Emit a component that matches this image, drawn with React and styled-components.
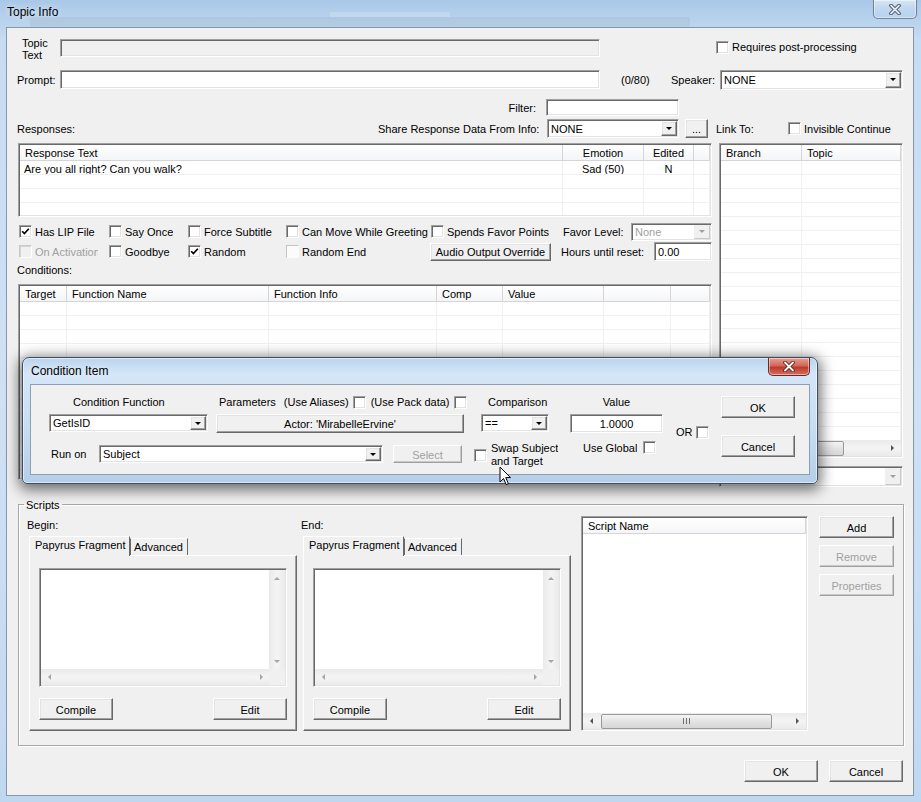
import React from 'react'
import styled, { createGlobalStyle, css } from 'styled-components'

const GlobalStyle = createGlobalStyle`
  * { box-sizing: border-box; }
  html, body { margin: 0; padding: 0; }
  body {
    font-family: "Liberation Sans", Arial, sans-serif;
    font-size: 11px;
    color: #000;
    background: #c4daf0;
  }
`

const sunken = css`
  border: 1px solid;
  border-color: #a0a0a0 #ffffff #ffffff #a0a0a0;
  box-shadow: inset 1px 1px 0 #696969, inset -1px -1px 0 #e3e3e3;
`
const raised = css`
  border: 1px solid;
  border-color: #ffffff #696969 #696969 #ffffff;
  box-shadow: inset -1px -1px 0 #a0a0a0, inset 1px 1px 0 #e3e3e3;
`

const Desktop = styled.div`
  position: relative;
  width: 921px;
  height: 802px;
  overflow: hidden;
  display: flex;
  flex-direction: column;
  background: linear-gradient(180deg, #a9c8e8 0%, #c6dcf1 40px, #cfe2f4 50%, #c0d8ef 100%);
`
const TitleBar = styled.div`
  height: ${p => p.$h}px;
  flex-shrink: 0;
  display: flex;
  align-items: center;
  padding-left: ${p => p.$pl}px;
  background: ${p => p.$ghost
    ? `linear-gradient(rgba(110,125,140,0.11), rgba(110,125,140,0.11)) 30px 17px / 660px 10px no-repeat,
       linear-gradient(rgba(255,255,255,0.18), rgba(255,255,255,0.18)) 330px 12px / 120px 5px no-repeat`
    : 'transparent'};
`
const TitleText = styled.span`
  font-size: 12px;
  color: #000;
  padding-bottom: ${p => p.$pb || 0}px;
  text-shadow: 0 0 6px rgba(255, 255, 255, 0.9);
`
const CloseBtn = styled.div`
  margin-left: auto;
  margin-right: ${p => p.$mr}px;
  align-self: flex-start;
  width: ${p => p.$w}px;
  height: ${p => p.$h}px;
  display: flex;
  align-items: center;
  justify-content: center;
  border: 1px solid ${p => (p.$red ? '#6a2a24' : 'rgba(60, 80, 105, 0.65)')};
  border-top: none;
  border-radius: 0 0 5px 5px;
  background: ${p => p.$red
    ? 'linear-gradient(180deg, #e4a093 0%, #d2685b 45%, #c0392c 55%, #d3705f 100%)'
    : 'linear-gradient(180deg, rgba(255,255,255,0.55) 0%, rgba(220,234,247,0.35) 50%, rgba(190,212,235,0.4) 100%)'};
  box-shadow: inset 0 0 0 1px rgba(255, 255, 255, 0.45);
`

const Client = styled.div`
  flex: 1;
  margin: 0 7px 6px 6px;
  border: 1px solid #8797a8;
  background: #f0f0f0;
  display: flex;
  flex-direction: column;
  padding-left: 10px;
`
const Row = styled.div`
  display: flex;
  align-items: ${p => p.$align || 'center'};
  height: ${p => p.$h}px;
  margin-top: ${p => p.$mt || 0}px;
  margin-left: ${p => p.$ml || 0}px;
  padding-left: ${p => p.$pl || 0}px;
  padding-right: ${p => p.$pr || 0}px;
  justify-content: ${p => p.$justify || 'flex-start'};
  gap: ${p => p.$gap || 0}px;
  flex-shrink: 0;
`
const Text = styled.span`
  flex-shrink: 0;
  width: ${p => (p.$w ? `${p.$w}px` : 'auto')};
  padding-left: ${p => p.$pl || 0}px;
  padding-right: ${p => p.$pr || 0}px;
  padding-top: 1px;
  margin-left: ${p => p.$ml || 0}px;
  margin-top: ${p => p.$mt || 0}px;
  text-align: ${p => p.$align || 'left'};
  color: ${p => (p.$disabled ? '#a0a0a0' : '#000')};
  white-space: nowrap;
  line-height: ${p => p.$lh || 13}px;
  overflow: hidden;
`
const Field = styled.div`
  ${sunken}
  flex-shrink: 0;
  width: ${p => p.$w}px;
  height: ${p => p.$h || 19}px;
  margin-left: ${p => p.$ml || 0}px;
  background: ${p => (p.$disabled ? '#f0f0f0' : '#fff')};
  color: ${p => (p.$dim ? '#a0a0a0' : '#000')};
  display: flex;
  align-items: center;
  justify-content: ${p => (p.$center ? 'center' : 'flex-start')};
  padding: ${p => (p.$combo ? '0 0 0 3px' : '1px 3px 0')};
  white-space: nowrap;
  overflow: hidden;
`
const ArrowBox = styled.div`
  ${raised}
  margin: 1px 1px 1px auto;
  width: 16px;
  height: calc(100% - 2px);
  flex-shrink: 0;
  background: #f0f0f0;
  display: flex;
  align-items: center;
  justify-content: center;
  ${p => p.$disabled && css`
    border-color: #f0f0f0 #c8c8c8 #c8c8c8 #f0f0f0;
    box-shadow: none;
  `}
`
const Arrow = styled.span`
  width: 0;
  height: 0;
  flex-shrink: 0;
  ${({ $dir = 'down', $s = 3.5, $c = '#000' }) => {
    const t = 'transparent'
    if ($dir === 'down') return `border-left:${$s}px solid ${t};border-right:${$s}px solid ${t};border-top:${$s}px solid ${$c};`
    if ($dir === 'up') return `border-left:${$s}px solid ${t};border-right:${$s}px solid ${t};border-bottom:${$s}px solid ${$c};`
    if ($dir === 'left') return `border-top:${$s}px solid ${t};border-bottom:${$s}px solid ${t};border-right:${$s}px solid ${$c};`
    return `border-top:${$s}px solid ${t};border-bottom:${$s}px solid ${t};border-left:${$s}px solid ${$c};`
  }}
`
const Btn = styled.div`
  ${raised}
  flex-shrink: 0;
  width: ${p => p.$w}px;
  height: ${p => p.$h || 22}px;
  margin-left: ${p => p.$ml || 0}px;
  margin-top: ${p => p.$mt || 0}px;
  padding-top: 1px;
  background: #f0f0f0;
  display: flex;
  align-items: center;
  justify-content: center;
  white-space: nowrap;
  color: ${p => (p.$disabled ? '#a0a0a0' : '#000')};
  ${p => p.$disabled && css`
    border-color: #ffffff #a0a0a0 #a0a0a0 #ffffff;
    box-shadow: inset -1px -1px 0 #c8c8c8;
  `}
`
const Box = styled.span`
  ${sunken}
  width: 13px;
  height: 13px;
  flex-shrink: 0;
  margin-left: ${p => p.$ml || 0}px;
  margin-top: ${p => p.$mt || 0}px;
  background: ${p => (p.$disabled ? '#f0f0f0' : '#fff')};
  display: flex;
  align-items: center;
  justify-content: center;
  ${p => p.$disabled && css`
    border-color: #c8c8c8 #fff #fff #c8c8c8;
    box-shadow: inset 1px 1px 0 #d4d4d4;
  `}
  ${p => p.$flat && css`
    border-color: #c4c4c4 transparent transparent #c4c4c4;
    box-shadow: none;
    background: #fbfbfb;
  `}
`
const CheckLabel = styled.label`
  display: flex;
  align-items: ${p => (p.$top ? 'flex-start' : 'center')};
  gap: 3px;
  flex-shrink: 0;
  width: ${p => (p.$w ? `${p.$w}px` : 'auto')};
  margin-left: ${p => p.$ml || 0}px;
  margin-top: ${p => p.$mt || 0}px;
  align-self: ${p => p.$self || 'auto'};
`

const Tick = () => (
  <svg width="9" height="9" viewBox="0 0 9 9">
    <polyline points="1.2,4.2 3.4,6.6 7.8,1.8" fill="none" stroke="#000" strokeWidth="1.7" />
  </svg>
)

const Check = ({ w, label, checked, disabled, flat, clip, ml }) => (
  <CheckLabel $w={w} $ml={ml}>
    <Box $disabled={disabled} $flat={flat}>{checked && <Tick />}</Box>
    <Text $disabled={disabled} $w={clip}>{label}</Text>
  </CheckLabel>
)

const Combo = ({ w, h = 19, value, disabled, ml }) => (
  <Field $w={w} $h={h} $combo $ml={ml} $dim={disabled}>
    <Text $disabled={disabled}>{value}</Text>
    <ArrowBox $disabled={disabled}>
      <Arrow $s={3.5} $c={disabled ? '#a0a0a0' : '#000'} />
    </ArrowBox>
  </Field>
)

/* list view */
const ListBox = styled.div`
  ${sunken}
  flex-shrink: 0;
  width: ${p => p.$w}px;
  height: ${p => p.$h}px;
  margin-top: ${p => p.$mt || 0}px;
  background: #fff;
  padding: 1px;
  display: flex;
  flex-direction: column;
  overflow: hidden;
`
const ListHead = styled.div`
  display: flex;
  height: 16px;
  flex-shrink: 0;
  background: linear-gradient(180deg, #ffffff, #f4f5f7);
  border-bottom: 1px solid #d5d5d5;
`
const HeadCell = styled.div`
  flex: ${p => (p.$w ? `0 0 ${p.$w}px` : '1')};
  border-right: 1px solid #d5d5d5;
  padding: 1px 5px 0;
  line-height: 15px;
  white-space: nowrap;
  overflow: hidden;
  text-align: ${p => (p.$center ? 'center' : 'left')};
`
const ListBody = styled.div`
  flex: 1;
  overflow: hidden;
`
const ListRow = styled.div`
  display: flex;
  height: 14px;
  border-bottom: 1px solid #f0f0f0;
`
const Cell = styled.div`
  flex: ${p => (p.$w ? `0 0 ${p.$w}px` : '1')};
  border-right: 1px solid #f0f0f0;
  padding: 2px 4px 0;
  line-height: 13px;
  white-space: nowrap;
  overflow: hidden;
  text-align: ${p => (p.$center ? 'center' : 'left')};
`

const ScrollBar = styled.div`
  display: flex;
  align-items: center;
  height: 16px;
  flex-shrink: 0;
  background: linear-gradient(180deg, #eaeaea, #f4f4f4 50%, #eaeaea);
`
const ScrollBtn = styled.div`
  width: ${p => p.$w || 17}px;
  height: 100%;
  flex-shrink: 0;
  margin-left: ${p => (p.$end ? 'auto' : '0')};
  display: flex;
  align-items: center;
  justify-content: center;
`
const Thumb = styled.div`
  width: ${p => p.$w}px;
  margin-left: ${p => p.$ml || 0}px;
  height: 15px;
  flex-shrink: 0;
  border: 1px solid #9a9a9a;
  border-radius: 2px;
  background: linear-gradient(180deg, #f4f4f4, #e3e3e3 50%, #d6d6d6);
  display: flex;
  align-items: center;
  justify-content: center;
`
const Grip = styled.span`
  width: 7px;
  height: 6px;
  background: repeating-linear-gradient(90deg, #6f6f6f 0 1px, transparent 1px 3px);
`

const HScroll = ({ thumb, thumbMl, grip, arrowColor = '#555' }) => (
  <ScrollBar>
    <ScrollBtn><Arrow $dir="left" $s={3} $c={arrowColor} /></ScrollBtn>
    {thumb && <Thumb $w={thumb} $ml={thumbMl}>{grip && <Grip />}</Thumb>}
    <ScrollBtn $end><Arrow $dir="right" $s={3} $c={arrowColor} /></ScrollBtn>
  </ScrollBar>
)

const ListView = ({ w, h, mt, cols, rows = [], count, scroll }) => {
  const lines = Array.from({ length: count }, (_, i) => rows[i] || [])
  return (
    <ListBox $w={w} $h={h} $mt={mt}>
      <ListHead>
        {cols.map((c, i) => (
          <HeadCell key={i} $w={c.w} $center={c.center}>{c.label}</HeadCell>
        ))}
      </ListHead>
      <ListBody>
        {lines.map((r, i) => (
          <ListRow key={i}>
            {cols.map((c, j) => (
              <Cell key={j} $w={c.w} $center={c.center}>{r[j] || ''}</Cell>
            ))}
          </ListRow>
        ))}
      </ListBody>
      {scroll}
    </ListBox>
  )
}

/* layout blocks */
const TopicLabel = styled.div`
  width: 43px;
  flex-shrink: 0;
  padding-left: 5px;
  padding-top: 1px;
  line-height: 12px;
`
const Main = styled.div`
  display: flex;
  margin-top: 5px;
  margin-left: 1px;
  flex-shrink: 0;
`
const Column = styled.div`
  display: flex;
  flex-direction: column;
  flex-shrink: 0;
  width: ${p => p.$w}px;
  margin-left: ${p => p.$ml || 0}px;
`

const Group = styled.fieldset`
  margin: 10px 0 0 1px;
  width: 886px;
  height: 249px;
  padding: 4px 0 0 0;
  border: 1px solid #a8a8a8;
  box-shadow: inset 1px 1px 0 #fff, 1px 1px 0 #fff;
  min-width: 0;
  flex-shrink: 0;
`
const Legend = styled.legend`
  margin-left: 5px;
  padding: 1px 2px 0;
  line-height: 14px;
`
const GroupRow = styled.div`
  display: flex;
  align-items: flex-start;
`
const TabStrip = styled.div`
  display: flex;
  align-items: flex-end;
  height: 19px;
  margin-top: 4px;
`
const Tab = styled.div`
  position: relative;
  z-index: ${p => (p.$active ? 2 : 1)};
  width: ${p => p.$w}px;
  height: ${p => (p.$active ? 20 : 17)}px;
  margin-bottom: ${p => (p.$active ? -1 : 0)}px;
  border: 1px solid;
  border-bottom: none;
  border-color: ${p => (p.$active ? '#fff #696969 transparent #fff' : '#fff #696969 transparent #696969')};
  background: #f0f0f0;
  padding: ${p => (p.$active ? '2px 0 0 5px' : '2px 0 0 3px')};
  line-height: 13px;
  white-space: nowrap;
`
const TabPanel = styled.div`
  height: 176px;
  border: 1px solid;
  border-color: #fff #696969 #696969 #fff;
  box-shadow: inset -1px -1px 0 #a0a0a0;
  background: #f0f0f0;
  padding: 12px 9px 0 9px;
`
const Editor = styled.div`
  ${sunken}
  height: 119px;
  padding: 1px;
  display: grid;
  grid-template-columns: 1fr 16px;
  grid-template-rows: 1fr 16px;
  background: #fff;
`
const VTrack = styled.div`
  background: linear-gradient(90deg, #eaeaea, #f4f4f4 50%, #eaeaea);
  display: flex;
  flex-direction: column;
  align-items: center;
  justify-content: space-between;
  padding: 7px 0 6px;
`
const Corner = styled.div`
  background: #f0f0f0;
`
const HTrack = styled.div`
  background: linear-gradient(180deg, #eaeaea, #f4f4f4 50%, #eaeaea);
  display: flex;
  align-items: center;
  justify-content: space-between;
  padding: 0 6px 0 7px;
`

const ScriptPane = ({ title, ml }) => (
  <Column $w={268} $ml={ml}>
    <Text $ml={-2} $mt={1} $lh={14}>{title}</Text>
    <TabStrip>
      <Tab $active $w={101}>Papyrus Fragment</Tab>
      <Tab $w={58}>Advanced</Tab>
    </TabStrip>
    <TabPanel>
      <Editor>
        <div />
        <VTrack>
          <Arrow $dir="up" $s={3} $c="#a5a5a5" />
          <Arrow $dir="down" $s={3} $c="#a5a5a5" />
        </VTrack>
        <HTrack>
          <Arrow $dir="left" $s={3} $c="#a5a5a5" />
          <Arrow $dir="right" $s={3} $c="#a5a5a5" />
        </HTrack>
        <Corner />
      </Editor>
      <Row $h={22} $mt={11} $justify="space-between">
        <Btn $w={74}>Compile</Btn>
        <Btn $w={74}>Edit</Btn>
      </Row>
    </TabPanel>
  </Column>
)

/* condition dialog */
const Dialog = styled.div`
  position: absolute;
  left: 22px;
  top: 357px;
  width: 796px;
  height: 127px;
  z-index: 10;
  border: 1px solid #3c4d61;
  border-radius: 7px 7px 5px 5px;
  background: linear-gradient(180deg, #b9d4ee 0%, #d4e6f7 16px, #c9def3 50%, #b5cfe9 100%);
  box-shadow: 0 3px 14px 3px rgba(0, 0, 0, 0.55), inset 0 0 0 1px rgba(255, 255, 255, 0.55);
  padding: 0 7px 8px 7px;
  display: flex;
  flex-direction: column;
`
const DialogClient = styled.div`
  height: 91px;
  border: 1px solid #8ba0b5;
  background: #f0f0f0;
  display: flex;
`
const DialogLeft = styled.div`
  width: 690px;
  flex-shrink: 0;
  padding-left: 18px;
  display: flex;
  flex-direction: column;
`
const DialogRight = styled.div`
  display: flex;
  flex-direction: column;
`
const ParamGroup = styled.div`
  display: flex;
  align-items: center;
  width: 262px;
  flex-shrink: 0;
`
const Pointer = styled.svg`
  position: absolute;
  left: 499px;
  top: 466px;
  z-index: 20;
`

const CloseGlyph = ({ light }) => (
  <svg width="12" height="11" viewBox="0 0 12 11">
    <path d="M2 1.5 L10 9.5 M10 1.5 L2 9.5" stroke={light ? '#3b4a58' : '#5a1d17'} strokeWidth="3.6" strokeLinecap="round" />
    <path d="M2 1.5 L10 9.5 M10 1.5 L2 9.5" stroke={light ? '#dfe6ee' : '#fff'} strokeWidth="1.8" strokeLinecap="round" />
  </svg>
)

const responseCols = [
  { label: 'Response Text', w: 543 },
  { label: 'Emotion', w: 81, center: true },
  { label: 'Edited', w: 50, center: true },
  { label: '' },
]
const conditionCols = [
  { label: 'Target', w: 47 },
  { label: 'Function Name', w: 202 },
  { label: 'Function Info', w: 168 },
  { label: 'Comp', w: 66 },
  { label: 'Value', w: 101 },
  { label: '', w: 67 },
  { label: '' },
]
const linkCols = [
  { label: 'Branch', w: 81 },
  { label: 'Topic' },
]

export default function App() {
  return (
    <Desktop>
      <GlobalStyle />
      <TitleBar $h={27} $pl={7} $ghost>
        <TitleText $pb={3}>Topic Info</TitleText>
        <CloseBtn $w={44} $h={19} $mr={4}><CloseGlyph light /></CloseBtn>
      </TitleBar>

      <Client>
        <Row $h={24} $mt={8}>
          <TopicLabel>Topic<br />Text</TopicLabel>
          <Field $w={540} $h={18} $disabled />
          <CheckLabel $ml={116} $self="flex-start" $mt={4}>
            <Box />
            <Text>Requires post-processing</Text>
          </CheckLabel>
        </Row>

        <Row $h={19} $mt={10}>
          <Text $w={43}>Prompt:</Text>
          <Field $w={540} $h={19} />
          <Text $w={71} $pl={21}>(0/80)</Text>
          <Text $w={49}>Speaker:</Text>
          <Combo w={183} h={20} value="NONE" />
        </Row>

        <Row $h={17} $mt={10}>
          <Text $w={529} $align="right" $pr={10}>Filter:</Text>
          <Field $w={133} $h={17} />
        </Row>

        <Row $h={19} $mt={3}>
          <Text $w={361}>Responses:</Text>
          <Text $w={169}>Share Response Data From Info:</Text>
          <Combo w={132} h={19} value="NONE" />
          <Btn $w={23} $h={19} $ml={6}>...</Btn>
          <Text $w={80} $pl={8}>Link To:</Text>
          <Check label="Invisible Continue" />
        </Row>

        <Main>
          <Column $w={694}>
            <ListView
              w={694}
              h={74}
              cols={responseCols}
              rows={[['Are you all right? Can you walk?', 'Sad (50)', 'N']]}
              count={4}
            />
            <Row $h={19} $mt={5} $pl={1}>
              <Check w={90} label="Has LIP File" checked />
              <Check w={79} label="Say Once" />
              <Check w={98} label="Force Subtitle" />
              <Check w={145} label="Can Move While Greeting" />
              <Check w={132} label="Spends Favor Points" />
              <Text $w={68}>Favor Level:</Text>
              <Combo w={81} h={18} value="None" disabled />
            </Row>
            <Row $h={19} $mt={1} $pl={1}>
              <Check w={90} label="On Activation" disabled clip={63} />
              <Check w={79} label="Goodbye" />
              <Check w={98} label="Random" checked />
              <Check w={144} label="Random End" flat />
              <Btn $w={121} $h={18}>Audio Output Override</Btn>
              <Text $w={103} $pl={10}>Hours until reset:</Text>
              <Field $w={58} $h={19}>0.00</Field>
            </Row>
            <Row $h={14} $mt={2} $ml={-1}>
              <Text>Conditions:</Text>
            </Row>
            <ListView w={694} h={196} mt={7} cols={conditionCols} count={12} />
          </Column>

          <Column $w={184} $ml={7}>
            <ListView
              w={184}
              h={315}
              cols={linkCols}
              count={22}
              scroll={<HScroll thumb={106} />}
            />
            <Row $h={21} $mt={8}>
              <Combo w={184} h={21} value="" disabled />
            </Row>
          </Column>
        </Main>

        <Group>
          <Legend>Scripts</Legend>
          <GroupRow>
            <ScriptPane title="Begin:" ml={10} />
            <ScriptPane title="End:" ml={6} />
            <Column $w={227} $ml={10}>
              <ListBox $w={227} $h={215}>
                <ListHead>
                  <HeadCell>Script Name</HeadCell>
                </ListHead>
                <ListBody />
                <HScroll thumb={171} thumbMl={1} grip />
              </ListBox>
            </Column>
            <Column $w={75} $ml={11}>
              <Btn $w={75}>Add</Btn>
              <Btn $w={75} $mt={7} $disabled>Remove</Btn>
              <Btn $w={75} $mt={7} $disabled>Properties</Btn>
            </Column>
          </GroupRow>
        </Group>

        <Row $h={22} $mt={14} $justify="flex-end" $pr={10} $gap={11}>
          <Btn $w={74}>OK</Btn>
          <Btn $w={74}>Cancel</Btn>
        </Row>
      </Client>

      <Dialog>
        <TitleBar $h={26} $pl={1}>
          <TitleText>Condition Item</TitleText>
          <CloseBtn $w={42} $h={18} $mr={0} $red><CloseGlyph /></CloseBtn>
        </TitleBar>
        <DialogClient>
          <DialogLeft>
            <Row $h={14} $mt={10}>
              <Text $w={170} $pl={24}>Condition Function</Text>
              <ParamGroup>
                <Text>Parameters</Text>
                <Text $ml={8}>(Use Aliases)</Text>
                <Box $ml={4} />
                <Text $ml={5}>(Use Pack data)</Text>
                <Box $ml={4} />
              </ParamGroup>
              <Text $w={89} $pl={7}>Comparison</Text>
              <Text $w={93} $align="center">Value</Text>
            </Row>
            <Row $h={20} $mt={4}>
              <Combo w={159} h={18} value="GetIsID" />
              <Btn $w={248} $h={19} $ml={8}>Actor: 'MirabelleErvine'</Btn>
              <Combo w={68} h={18} value="==" ml={17} />
              <Field $w={93} $h={19} $ml={21} $center>1.0000</Field>
              <CheckLabel $ml={13} $self="flex-start" $mt={12}>
                <Text>OR</Text>
                <Box />
              </CheckLabel>
            </Row>
            <Row $h={26} $mt={8} $align="flex-start">
              <Text $w={50} $pl={2} $mt={6}>Run on</Text>
              <Row $h={26}>
                <Combo w={284} h={18} value="Subject" />
                <Btn $w={69} $h={18} $ml={10} $disabled>Select</Btn>
              </Row>
              <CheckLabel $w={109} $ml={12} $top>
                <Box $mt={8} />
                <Text $ml={1}>Swap Subject<br />and Target</Text>
              </CheckLabel>
              <CheckLabel $top>
                <Text>Use Global</Text>
                <Box $ml={3} />
              </CheckLabel>
            </Row>
          </DialogLeft>
          <DialogRight>
            <Btn $w={74} $mt={11}>OK</Btn>
            <Btn $w={74} $mt={17}>Cancel</Btn>
          </DialogRight>
        </DialogClient>
      </Dialog>

      <Pointer width="13" height="20" viewBox="0 0 13 20">
        <path d="M1 1 L1 16 L4.5 12.5 L7.2 18.6 L9.4 17.6 L6.8 11.6 L11.5 11.6 Z" fill="#fff" stroke="#000" strokeWidth="1" strokeLinejoin="round" />
      </Pointer>
    </Desktop>
  )
}
